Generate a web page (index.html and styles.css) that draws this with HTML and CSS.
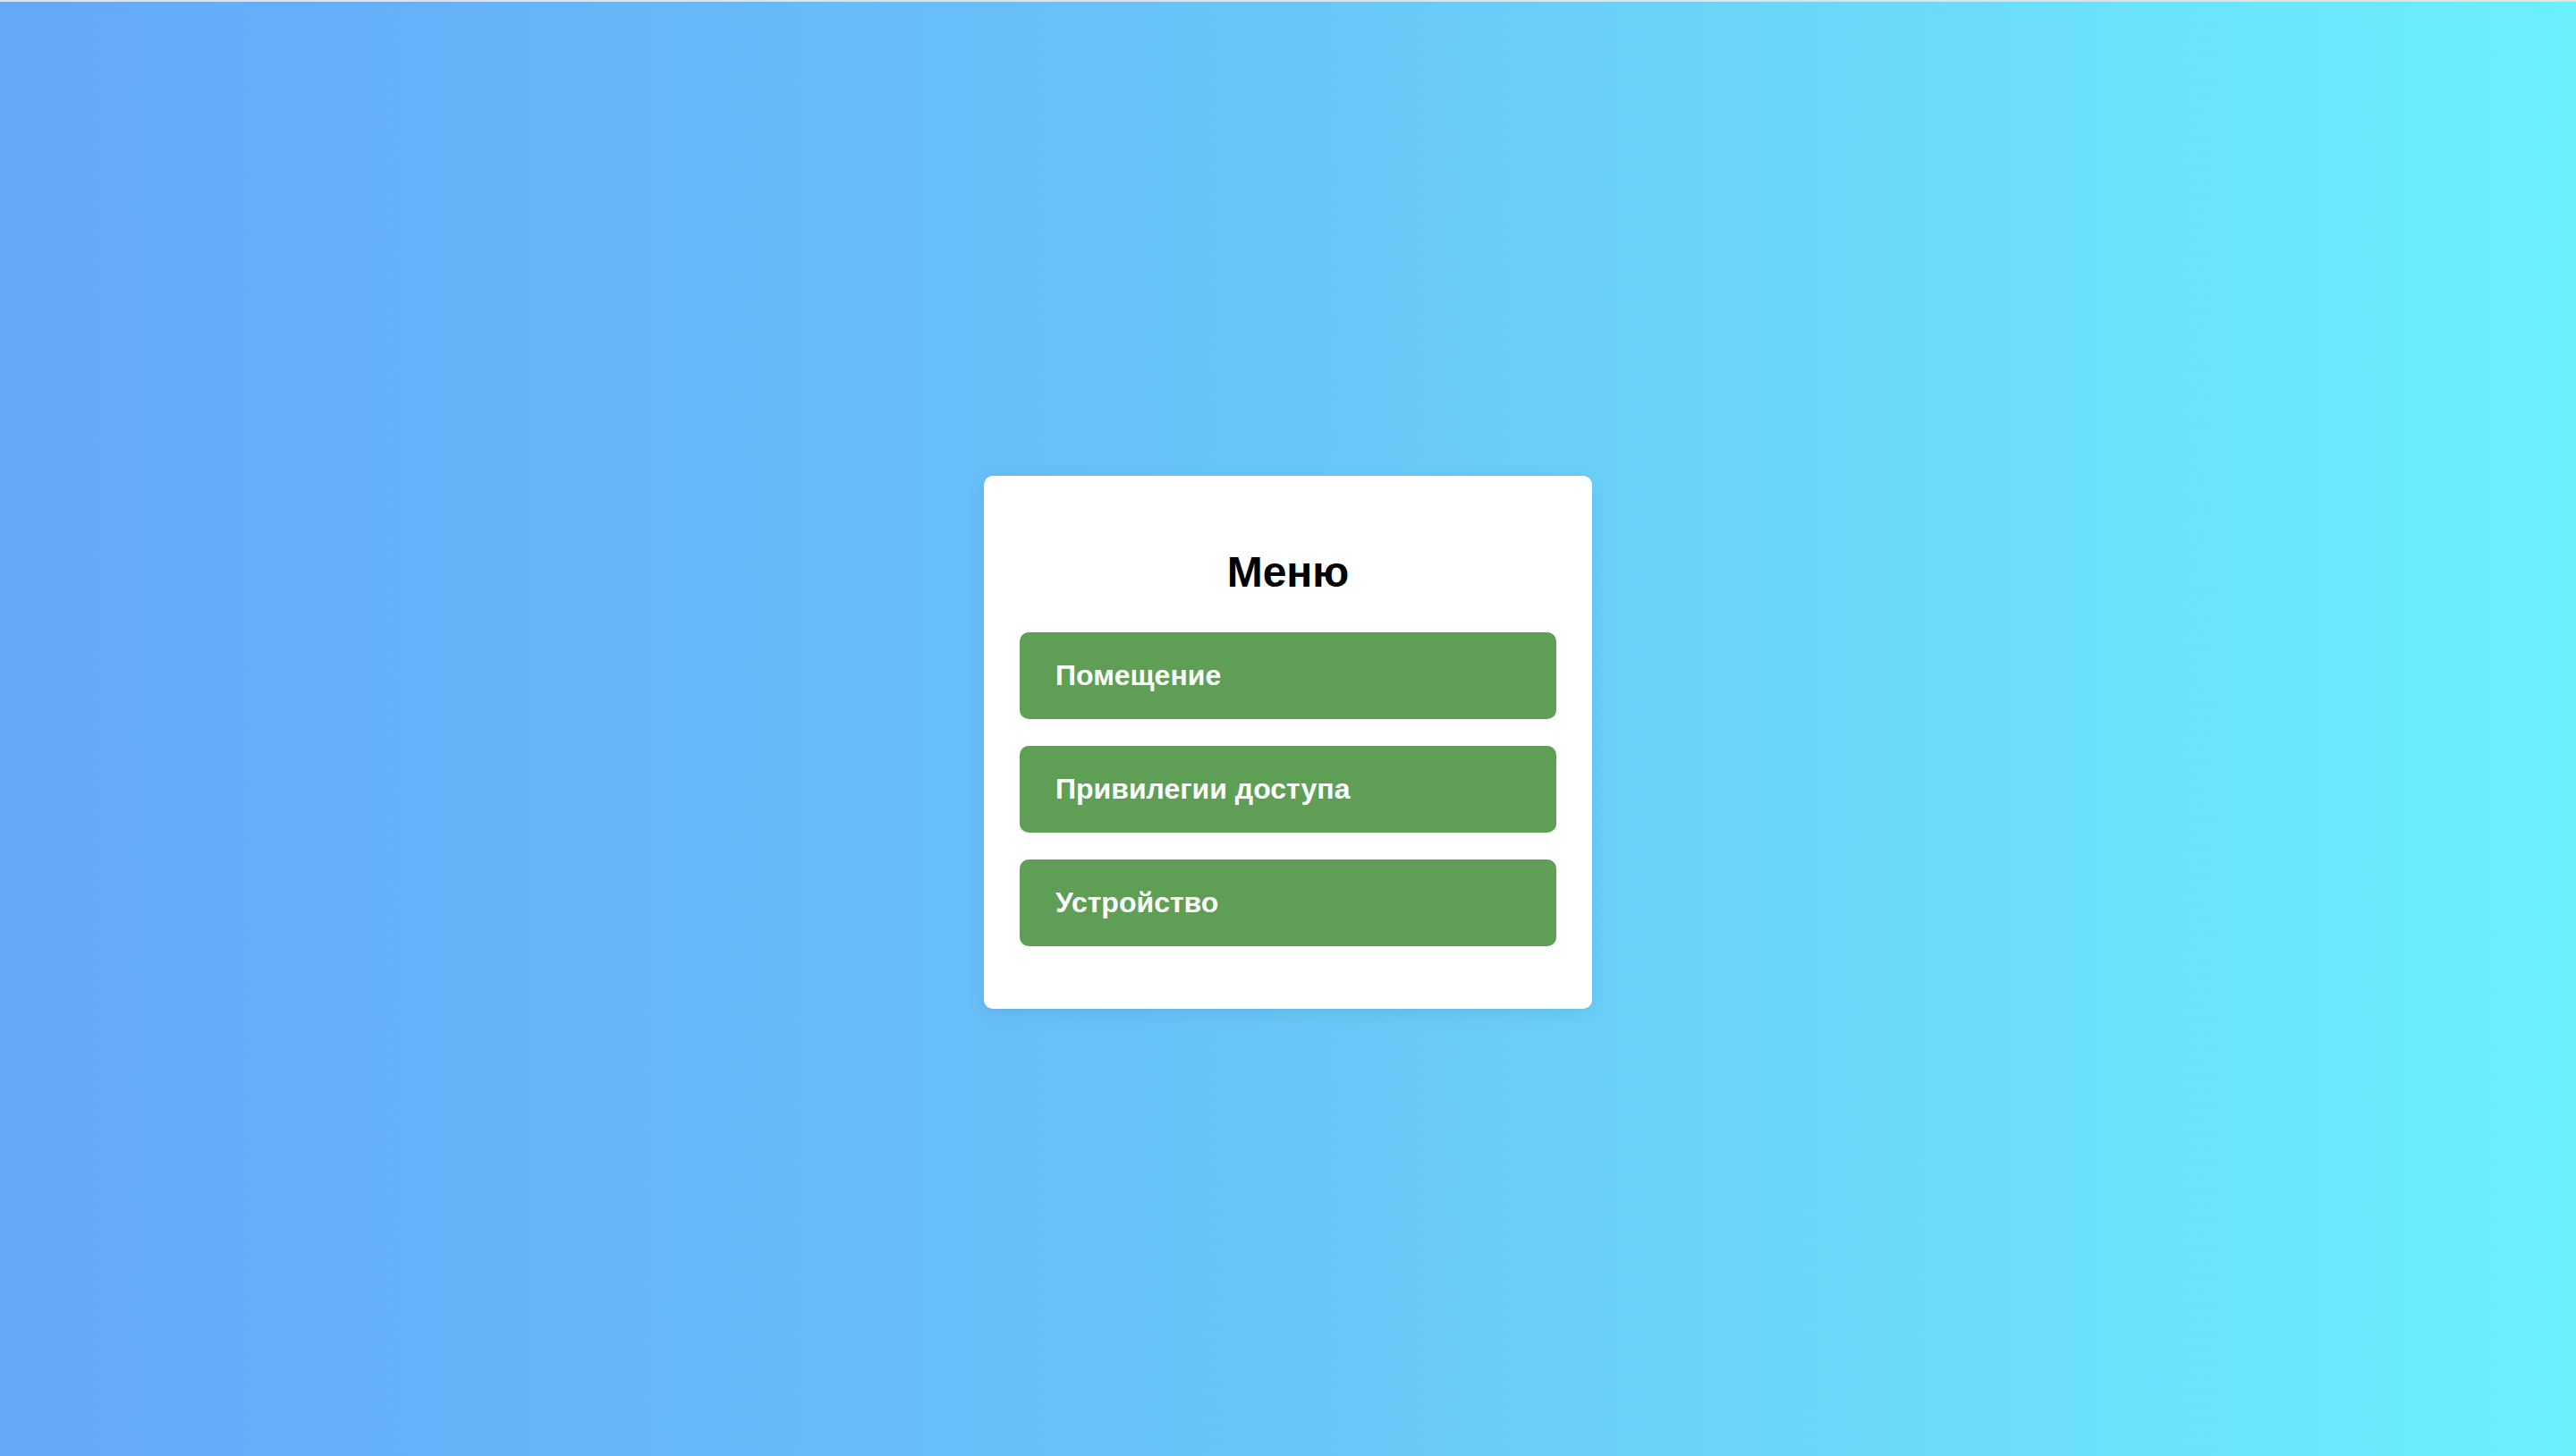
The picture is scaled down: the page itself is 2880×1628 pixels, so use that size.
FILE: index.html
```html
<!DOCTYPE html>
<html lang="ru">
<head>
<meta charset="utf-8">
<title>Меню</title>
<link rel="stylesheet" href="styles.css">
</head>
<body>
<div class="menu-card">
  <h2 class="menu-title">Меню</h2>
  <nav class="menu-list">
    <a class="menu-btn" href="#">Помещение</a>
    <a class="menu-btn" href="#">Привилегии доступа</a>
    <a class="menu-btn" href="#">Устройство</a>
  </nav>
</div>
</body>
</html>
```
FILE: styles.css
```css
html {
  border-top: 2px solid #e2e2e2;
  background: linear-gradient(to right, #64a8f8 0%, #69c6f8 50%, #6cf0fc 100%);
  min-height: 100%;
}
body {
  margin: 14px 16px 16px;
  min-height: 1628px;
  display: flex;
  align-items: center;
  justify-content: center;
  font-family: "Liberation Sans", Arial, sans-serif;
}
.menu-card {
  width: 600px;
  padding: 40px;
  background: #ffffff;
  border-radius: 10px;
  box-shadow: 0 4px 20px rgba(0, 0, 0, 0.08);
}
.menu-title {
  margin: 40px 0;
  text-align: center;
  font-size: 48px;
  font-weight: bold;
  color: #000;
  line-height: normal;
}
.menu-list {
  display: flex;
  flex-direction: column;
  gap: 30px;
  margin-bottom: 30px;
}
.menu-btn {
  display: block;
  padding: 30px 40px;
  background: #5e9f55;
  color: #ffffff;
  border-radius: 10px;
  font-size: 32px;
  font-weight: bold;
  line-height: 37px;
  text-decoration: none;
}
```
